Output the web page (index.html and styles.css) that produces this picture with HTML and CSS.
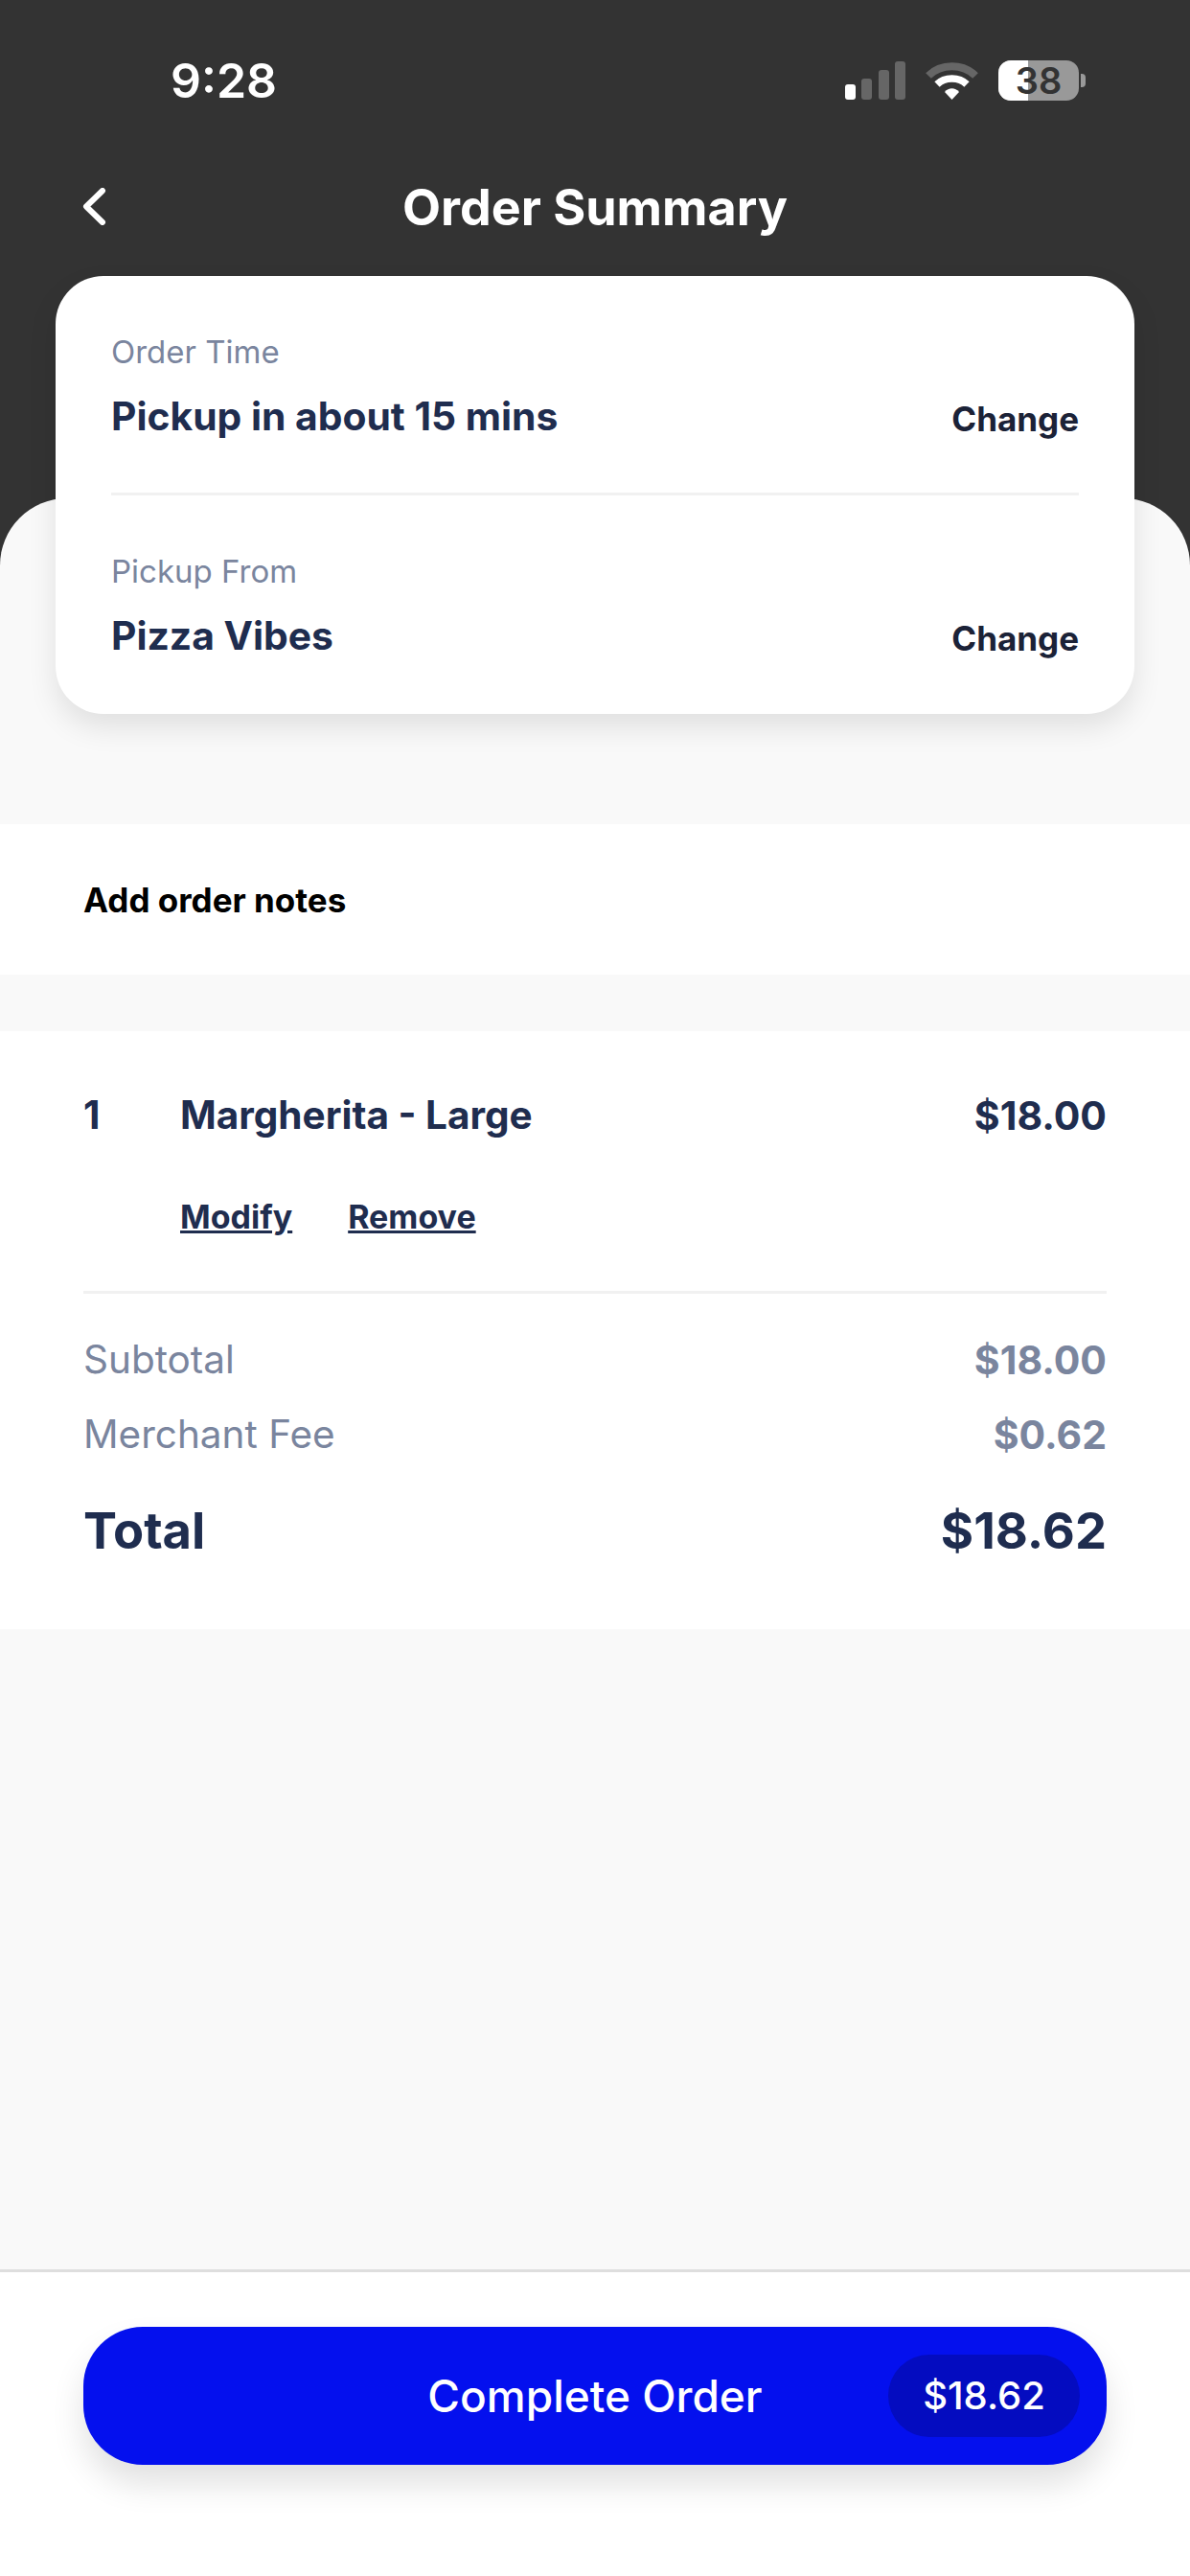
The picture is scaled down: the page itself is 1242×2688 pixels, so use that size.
FILE: index.html
```html
<!DOCTYPE html>
<html>
  <head>
    <title>Order Summary</title>
    <link rel="stylesheet" href="styles.css">
  </head>
  <body>
    <div class="page">
      <header class="top">
        <div class="status-bar">
          <span class="clock">9:28</span>
          <div class="status-icons">
            <svg class="signal" width="63" height="40" viewBox="0 0 63 40">
              <rect x="0" y="24" width="11" height="16" rx="3" fill="#fff" />
              <rect x="17" y="18" width="11" height="22" rx="3" fill="#666" />
              <rect x="35" y="9" width="11" height="31" rx="3" fill="#666" />
              <rect x="52" y="0" width="11" height="40" rx="3" fill="#666" />
            </svg>
            <svg class="wifi" width="55" height="40" viewBox="0 0 55 40">
              <path d="M3 15 C16 2 39 2 52 15" fill="none" stroke="#666" stroke-width="8" />
              <path d="M12 24 C20 16 35 16 43 24" fill="none" stroke="#fff" stroke-width="7.5" />
              <path d="M20 32 C24 27 31 27 35 32 L27.5 40 Z" fill="#fff" />
            </svg>
            <div class="battery">
              <div class="battery-body">
                <div class="battery-fill"></div>
                <span class="battery-text">38</span>
              </div>
              <div class="battery-tip"></div>
            </div>
          </div>
        </div>

        <div class="nav-bar">
          <svg class="back" width="25" height="39" viewBox="0 0 25 39">
            <path d="M21 3 L4 19.5 L21 36" fill="none" stroke="#fff" stroke-width="6" stroke-linecap="round" stroke-linejoin="round" />
          </svg>
          <h1>Order Summary</h1>
        </div>

        <div class="info-card">
          <div class="info-row info-row-first">
            <div>
              <div class="info-label">Order Time</div>
              <div class="info-value">Pickup in about 15 mins</div>
            </div>
            <span class="change">Change</span>
          </div>
          <div class="info-row">
            <div>
              <div class="info-label">Pickup From</div>
              <div class="info-value">Pizza Vibes</div>
            </div>
            <span class="change">Change</span>
          </div>
        </div>
      </header>

      <main class="sheet">
        <div class="notes">Add order notes</div>

        <section class="order">
          <div class="item">
            <span class="item-qty">1</span>
            <span class="item-name">Margherita - Large</span>
            <span class="item-price">$18.00</span>
          </div>
          <div class="item-actions">
            <a>Modify</a>
            <a>Remove</a>
          </div>
          <div class="totals">
            <div class="total-row">
              <span>Subtotal</span>
              <strong>$18.00</strong>
            </div>
            <div class="total-row">
              <span>Merchant Fee</span>
              <strong>$0.62</strong>
            </div>
            <div class="grand-total">
              <span>Total</span>
              <span>$18.62</span>
            </div>
          </div>
        </section>
      </main>

      <footer class="footer">
        <button class="complete">
          <span>Complete Order</span>
          <span class="complete-price">$18.62</span>
        </button>
      </footer>
    </div>
  </body>
</html>
```

FILE: styles.css
```css
* {
  box-sizing: border-box;
}
html,
body {
  margin: 0;
  padding: 0;
}
body {
  font-family: Inter, "Liberation Sans", sans-serif;
  color: #1f2d4f;
}
.page {
  width: 1242px;
  height: 2688px;
  display: flex;
  flex-direction: column;
  background-color: #333333;
  overflow: hidden;
}
.top {
  position: relative;
  z-index: 1;
  height: 520px;
  padding: 0 58px;
}
.status-bar {
  height: 168px;
  margin: 0 -58px;
  padding: 55px 109px 0 178px;
  display: flex;
  justify-content: space-between;
  align-items: flex-start;
}
.clock {
  font-size: 50px;
  line-height: 58px;
  font-weight: 600;
  color: #fff;
}
.status-icons {
  display: flex;
  align-items: center;
  gap: 21px;
  padding-top: 8px;
}
.signal,
.wifi {
  display: block;
}
.battery {
  display: flex;
  align-items: center;
  gap: 2px;
}
.battery-body {
  position: relative;
  width: 84px;
  height: 42px;
  border-radius: 13px;
  background-color: #999999;
  text-align: center;
}
.battery-fill {
  position: absolute;
  left: 0;
  top: 0;
  bottom: 0;
  width: 31px;
  border-radius: 13px 0 0 13px;
  background-color: #fff;
}
.battery-text {
  position: relative;
  display: block;
  font-size: 38px;
  line-height: 42px;
  font-weight: 600;
  color: #333333;
}
.battery-tip {
  width: 5px;
  height: 14px;
  border-radius: 0 4px 4px 0;
  background-color: #999999;
}
.nav-bar {
  position: relative;
  height: 94px;
}
.nav-bar h1 {
  margin: 0 -58px;
  font-size: 52px;
  line-height: 97px;
  font-weight: 700;
  color: #fff;
  text-align: center;
}
.back {
  position: absolute;
  left: 28px;
  top: 28px;
}
.info-card {
  margin-top: 26px;
  height: 457px;
  padding: 0 58px;
  background-color: #fff;
  border-radius: 50px;
  box-shadow: 0 14px 30px rgba(0, 0, 0, 0.1);
}
.info-row {
  height: 228px;
  padding-top: 58px;
  display: flex;
  justify-content: space-between;
  align-items: flex-start;
}
.info-row-first {
  height: 229px;
  border-bottom: 3px solid #f1f1f1;
}
.info-label {
  font-size: 33px;
  line-height: 42px;
  color: #7a859e;
}
.info-value {
  margin-top: 22px;
  font-size: 40.8px;
  line-height: 48px;
  font-weight: 700;
}
.change {
  margin-top: 67px;
  font-size: 35px;
  line-height: 48px;
  font-weight: 700;
  color: #1b2237;
}
.sheet {
  flex: 1;
  padding-top: 340px;
  background-color: #f9f9f9;
  border-radius: 70px 70px 0 0;
}
.notes {
  height: 157px;
  padding: 0 87px;
  display: flex;
  align-items: center;
  background-color: #fff;
  font-size: 35px;
  font-weight: 700;
  color: #000;
}
.order {
  margin-top: 59px;
  height: 624px;
  padding: 59px 87px 0;
  background-color: #fff;
}
.item {
  display: flex;
  font-size: 40.5px;
  line-height: 58px;
  font-weight: 700;
}
.item-qty {
  width: 101px;
}
.item-name {
  flex: 1;
}
.item-price {
  font-size: 41px;
}
.item-actions {
  margin-top: 52px;
  height: 105px;
  padding-left: 101px;
  display: flex;
  gap: 58px;
  font-size: 34px;
  line-height: 50px;
  font-weight: 700;
  border-bottom: 3px solid #f1f1f1;
}
.item-actions a {
  text-decoration: underline;
}
.totals {
  padding-top: 44px;
}
.total-row {
  display: flex;
  justify-content: space-between;
  height: 78px;
  font-size: 40.5px;
  line-height: 50px;
  color: #7a859e;
}
.total-row strong {
  font-size: 41px;
  font-weight: 700;
}
.grand-total {
  display: flex;
  justify-content: space-between;
  margin-top: 15px;
  font-size: 52.5px;
  line-height: 64px;
  font-weight: 700;
}
.footer {
  height: 320px;
  padding: 57px 87px 0;
  background-color: #fff;
  border-top: 3px solid #dedede;
}
.complete {
  position: relative;
  width: 100%;
  height: 144px;
  padding: 0;
  border: none;
  border-radius: 62px;
  background-color: #0410ee;
  box-shadow: 0 20px 34px rgba(0, 0, 0, 0.12);
  font-family: inherit;
  font-size: 46px;
  font-weight: 500;
  color: #fff;
}
.complete-price {
  position: absolute;
  right: 28px;
  top: 29px;
  width: 200px;
  height: 86px;
  border-radius: 43px;
  background-color: #040cc0;
  font-size: 40px;
  line-height: 86px;
  font-weight: 500;
}
```
